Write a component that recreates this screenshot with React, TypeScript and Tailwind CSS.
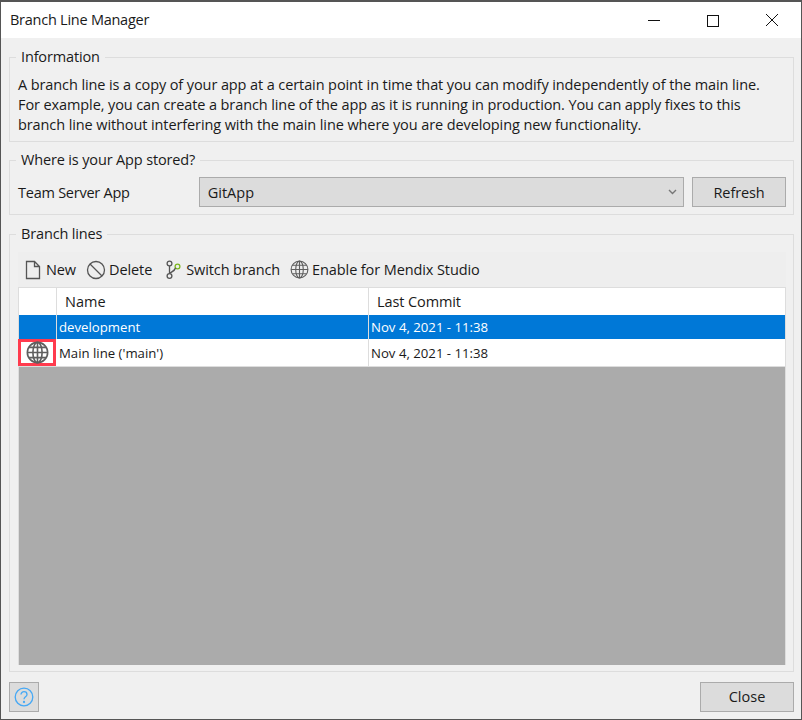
const font = "font-['Open_Sans','Noto_Sans',sans-serif]";

function GlobeIcon({ size, weight = 1.6 }: { size: number; weight?: number }) {
  return (
    <svg width={size} height={size} viewBox="0 0 24 24" fill="none" stroke="#5f5f5f" strokeWidth={weight}>
      <circle cx="12" cy="12" r="10.6" />
      <ellipse cx="12" cy="12" rx="4.8" ry="10.6" />
      <path d="M12 1.4v21.2M1.4 12h21.2M3 6.6h18M3 17.4h18" />
    </svg>
  );
}

function WindowButtons() {
  return (
    <div className="flex items-center">
      <svg width="14" height="14" viewBox="0 0 14 14" className="mr-[45px]">
        <path d="M1 7.5h12" stroke="#111" strokeWidth="1" />
      </svg>
      <svg width="13" height="13" viewBox="0 0 13 13" className="mr-[46px]">
        <rect x="1.5" y="1.5" width="11" height="11" fill="none" stroke="#111" strokeWidth="1" />
      </svg>
      <svg width="14" height="14" viewBox="0 0 14 14">
        <path d="M1 1l12 12M13 1L1 13" stroke="#111" strokeWidth="1" />
      </svg>
    </div>
  );
}

function Group({ title, className, children }: { title: string; className: string; children: React.ReactNode }) {
  return (
    <fieldset className={`ml-2 mr-[7px] border border-[#dddddd] min-w-0 ${className}`}>
      <legend className="ml-[6px] px-[5px] text-[14.5px] leading-[20px] tracking-[-0.15px] text-[#1a1a1a]">{title}</legend>
      {children}
    </fieldset>
  );
}

function ToolItem({ icon, label }: { icon: React.ReactNode; label: string }) {
  return (
    <div className="flex items-center gap-[3px]">
      {icon}
      <span>{label}</span>
    </div>
  );
}

export default function App() {
  return (
    <div className={`${font} w-[802px] h-[720px] flex flex-col bg-[#f0f0f0] border border-[#555555] border-t-2 text-[#1a1a1a] overflow-hidden`}>
      <header className="h-9 bg-white flex items-center justify-between pl-[9px] pr-[22px] shrink-0">
        <span className="text-[14.5px] tracking-[-0.25px]">Branch Line Manager</span>
        <WindowButtons />
      </header>

      <div className="flex-1 flex flex-col pt-[9px]">
        <Group title="Information" className="h-[95px] mb-[8px]">
          <div className="pl-2 pt-[8px] text-[14.5px] leading-5 whitespace-nowrap tracking-[-0.1px]">
            <p>A branch line is a copy of your app at a certain point in time that you can modify independently of the main line.</p>
            <p>For example, you can create a branch line of the app as it is running in production. You can apply fixes to this</p>
            <p>branch line without interfering with the main line where you are developing new functionality.</p>
          </div>
        </Group>

        <Group title="Where is your App stored?" className="h-[65px] mb-[9px]">
          <div className="flex items-center pl-2 pr-[7px] text-[14.5px] pt-[7px]">
            <span className="w-[181px] pt-[2px] tracking-[-0.25px]">Team Server App</span>
            <div className="w-[486px] h-[30px] flex items-center justify-between bg-[#dcdcdc] border border-[#ababab] pl-2 pr-[6px]">
              <span className="pt-[2px]">GitApp</span>
              <svg width="9" height="6" viewBox="0 0 9 6">
                <path d="M1 1l3.5 3.5L8 1" fill="none" stroke="#777" strokeWidth="1.4" />
              </svg>
            </div>
            <button className="ml-2 w-[94px] h-[30px] pt-[2px] bg-[#dcdcdc] border border-[#ababab] tracking-[-0.1px]">Refresh</button>
          </div>
        </Group>

        <Group title="Branch lines" className="h-[448px] mb-[10px]">
          <div className="ml-2 mr-[7px] mt-[8px] flex flex-col h-[413px] text-[14.5px]">
            <div className="h-[35px] shrink-0 bg-[#eeeeee] flex items-center pl-[5px] tracking-[-0.1px]">
              <ToolItem
                label="New"
                icon={
                  <svg width="20" height="20" viewBox="0 0 20 20" fill="none" stroke="#555" strokeWidth="1.3">
                    <path d="M3.5 1.5h8l5 5v12h-13zM11.5 1.5v5h5" />
                  </svg>
                }
              />
              <div className="ml-[10px]">
                <ToolItem
                  label="Delete"
                  icon={
                    <svg width="20" height="20" viewBox="0 0 20 20" fill="none" stroke="#555" strokeWidth="1.3">
                      <circle cx="10" cy="10" r="8.5" />
                      <path d="M4 4l12 12" />
                    </svg>
                  }
                />
              </div>
              <div className="ml-[13px]">
                <ToolItem
                  label="Switch branch"
                  icon={
                    <svg width="18" height="20" viewBox="0 0 18 20" fill="none" strokeWidth="1.3">
                      <circle cx="4.5" cy="3.5" r="2.4" stroke="#555" />
                      <circle cx="4.5" cy="16" r="2.4" stroke="#555" />
                      <circle cx="12.5" cy="6.5" r="2.4" stroke="#7ab51d" />
                      <path d="M4.5 6v7.5M10.5 8c-.5 2.5-3 3.5-5.5 5" stroke="#555" />
                    </svg>
                  }
                />
              </div>
              <div className="ml-[10px]">
                <ToolItem label="Enable for Mendix Studio" icon={<GlobeIcon size={19} weight={1.4} />} />
              </div>
            </div>

            <div className="flex-1 flex flex-col bg-[#ababab] border-x border-[#dddddd]">
              <div className="h-[28px] shrink-0 bg-white border-t border-[#dddddd] flex items-center">
                <div className="w-[38px] h-full border-r border-[#dddddd]" />
                <div className="w-[312px] h-full border-r border-[#dddddd] flex items-center pl-2">Name</div>
                <div className="pl-2 tracking-[-0.1px]">Last Commit</div>
              </div>
              <div className="h-[24px] shrink-0 bg-[#0078d7] text-white text-[13.2px] flex items-center">
                <div className="w-[38px] h-full border-r border-[#dddddd]" />
                <div className="w-[312px] h-full border-r border-[#dddddd] flex items-center pl-[2px] pt-[2px]">development</div>
                <div className="pl-[2px] pt-[2px]">Nov 4, 2021 - 11:38</div>
              </div>
              <div className="h-[28px] shrink-0 bg-white border-b border-[#dddddd] text-[13.2px] flex items-center">
                <div className="w-[38px] h-full flex items-center justify-center border-[3px] border-[#ff3b4e] -ml-px mr-px">
                  <GlobeIcon size={23} weight={1.7} />
                </div>
                <div className="w-[312px] h-full border-r border-[#dddddd] flex items-center pl-[2px] pt-[3px]">Main line ('main')</div>
                <div className="pl-[2px] pt-[3px]">Nov 4, 2021 - 11:38</div>
              </div>
            </div>
          </div>
        </Group>

        <footer className="ml-2 mr-[7px] flex justify-between text-[14.5px]">
          <button className="w-[30px] h-[30px] bg-[#dcdcdc] border border-[#ababab] flex items-center justify-center">
            <svg width="20" height="20" viewBox="0 0 20 20" fill="none" stroke="#45a8f5" strokeWidth="1.3">
              <circle cx="10" cy="10" r="8.8" />
              <path d="M7 7.6c0-1.8 1.4-2.9 3-2.9s3 1.1 3 2.7c0 2.4-3 2.4-3 4.8" />
              <circle cx="10" cy="15" r=".5" />
            </svg>
          </button>
          <button className="w-[94px] h-[30px] bg-[#dcdcdc] border border-[#ababab]">Close</button>
        </footer>
      </div>
    </div>
  );
}
